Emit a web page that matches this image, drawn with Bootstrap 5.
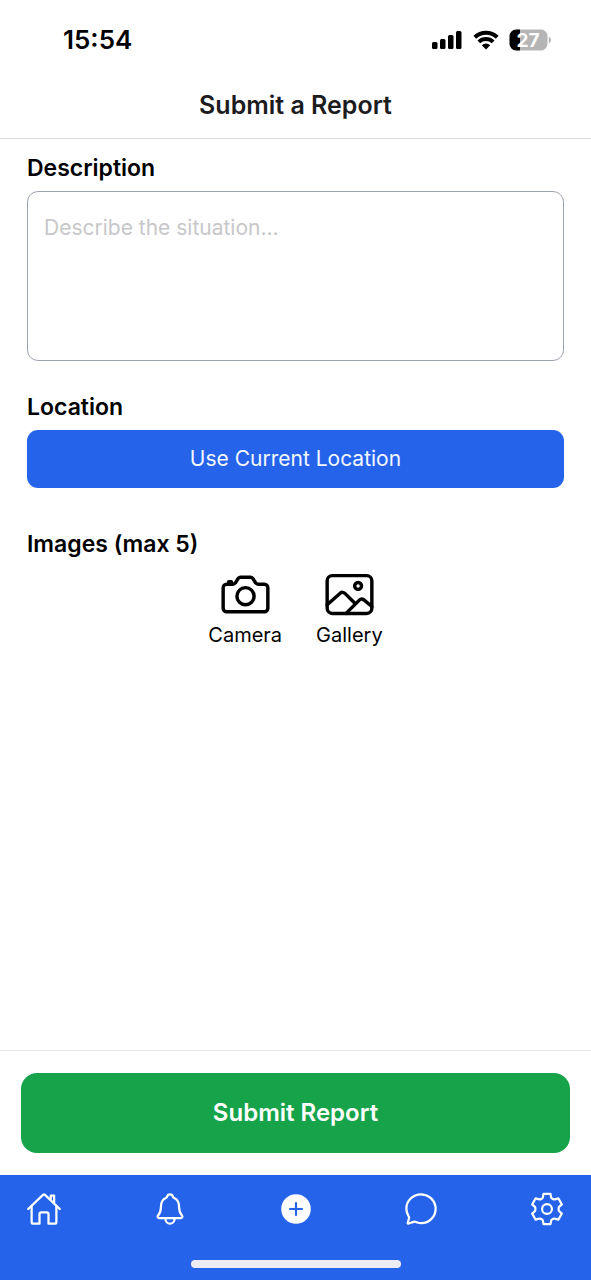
<!DOCTYPE html>
<html lang="en">
<head>
<meta charset="utf-8">
<meta name="viewport" content="width=device-width, initial-scale=1">
<title>Submit a Report</title>
<link href="https://cdn.jsdelivr.net/npm/bootstrap@5.3.0/dist/css/bootstrap.min.css" rel="stylesheet">
<style>
  body { font-family: Inter, "Liberation Sans", sans-serif; color: #000; background: #fff; }
  .status-row { height: 80px; padding: 0 39px 0 63px; }
  .clock { font-size: 26px; line-height: 32px; font-weight: 600; }
  .page-head { height: 59px; border-bottom: 1px solid #d8d8d8; padding-bottom: 8px; }
  .page-title { font-size: 25px; line-height: 32px; font-weight: 600; color: #1c1c1e; }
  .report-form { padding: 13px 27px 0; }
  .field-label { font-size: 23px; line-height: 32px; font-weight: 600; margin-bottom: 7px; }
  .field-text { height: 170px; padding: 20px 16px; border: 1px solid #9ca3af; border-radius: 11px; font-size: 21px; line-height: 32px; resize: none; }
  .field-text::placeholder { color: #c7c7c9; }
  .field-block { margin-bottom: 30px; }
  .locate-block { margin-bottom: 40px; }
  .btn-locate { height: 58px; border-radius: 11px; font-size: 21px; background: #2563eb; color: #f3f7ff; }
  .btn-send { height: 80px; border-radius: 16px; font-size: 24px; font-weight: 600; background: #16a34a; color: #fff; }
  .btn-locate:hover { background: #1d4ed8; color: #fff; }
  .btn-send:hover { background: #15803d; color: #fff; }
  .pick-row { gap: 34px; }
  .btn-pick { font-size: 20px; line-height: 26px; color: #000; }
  .send-bar { padding: 22px 21px; border-top: 1px solid #e5e7eb; }
  .tab-bar { height: 105px; padding: 16px 26px 12px; background: #2563eb; color: #fff; }
  .home-bar { width: 210px; height: 8px; background: #ececf3; }
  .line-icon { fill: none; stroke: currentColor; stroke-width: 32; stroke-linecap: round; stroke-linejoin: round; }
  .battery-level { font-size: 19px; font-weight: 700; fill: #fff; }
</style>
</head>
<body class="d-flex flex-column min-vh-100">
  <div class="status-row d-flex justify-content-between align-items-center">
    <span class="clock">15:54</span>
    <div class="d-flex align-items-center">
      <svg class="me-2" width="34" height="20" viewBox="0 0 34 20" aria-hidden="true">
        <rect x="1" y="12" width="5.500" height="7" rx="1.500"/><rect x="9" y="9" width="5.500" height="10" rx="1.500"/><rect x="17" y="5" width="5.500" height="14" rx="1.500"/><rect x="25" y="1" width="5.500" height="18" rx="1.500"/>
      </svg>
      <svg class="me-2" width="28" height="20" viewBox="0 0 28 20" fill="none" stroke="#000" stroke-width="4" aria-hidden="true">
        <path d="M1.800 7.200A16.500 16.500 0 0 1 24.200 7.200M5.800 11.900A10.500 10.500 0 0 1 20.200 11.900"/><path d="M13 19.500L8.800 15.300A6 6 0 0 1 17.200 15.300Z" fill="#000" stroke="none"/>
      </svg>
      <svg width="43" height="22" viewBox="0 0 43 22" role="img" aria-label="Battery 27%">
        <path d="M11 .5V21.500H7A6.500 6.500 0 0 1 .5 15V7A6.500 6.500 0 0 1 7 .5Z"/>
        <path d="M11 .5H32A6.500 6.500 0 0 1 38.500 7V15A6.500 6.500 0 0 1 32 21.500H11ZM39.800 7.500Q42 8.500 42 11T39.800 14.500Z" fill="#b5b5b5"/>
        <text class="battery-level" x="19" y="18" text-anchor="middle">27</text>
      </svg>
    </div>
  </div>
  <header class="page-head d-flex align-items-center justify-content-center">
    <h1 class="page-title m-0">Submit a Report</h1>
  </header>
  <main class="flex-grow-1">
    <form id="report" class="report-form">
      <div class="field-block">
        <label class="field-label d-block" for="description">Description</label>
        <textarea id="description" class="field-text form-control" placeholder="Describe the situation..."></textarea>
      </div>
      <div class="locate-block">
        <h2 class="field-label">Location</h2>
        <button type="button" class="btn btn-locate border-0 w-100 p-0">Use Current Location</button>
      </div>
      <h2 class="field-label">Images (max 5)</h2>
      <div class="pick-row d-flex justify-content-center">
        <button type="button" class="btn btn-pick border-0 p-0 d-flex flex-column align-items-center">
          <svg class="line-icon" width="55" height="55" viewBox="0 0 512 512" aria-hidden="true"><path d="M350.540 148.680l-26.620-42.060C318.310 100.080 310.620 96 302 96h-92c-8.620 0-16.310 4.080-21.920 10.620l-26.620 42.060C155.850 155.230 148.620 160 140 160H80a32 32 0 00-32 32v192a32 32 0 0032 32h352a32 32 0 0032-32V192a32 32 0 00-32-32h-59c-8.650 0-16.850-4.770-22.460-11.320z"/><circle cx="256" cy="272" r="80"/><path d="M124 158v-22h-24v22"/></svg>
          Camera
        </button>
        <button type="button" class="btn btn-pick border-0 p-0 d-flex flex-column align-items-center">
          <svg class="line-icon" width="55" height="55" viewBox="0 0 512 512" aria-hidden="true"><rect x="48" y="80" width="416" height="352" rx="48"/><circle cx="336" cy="176" r="32"/><path d="M304 335.790l-90.660-90.490a32 32 0 00-43.870-1.300L48 352M224 432l123.340-123.340a32 32 0 0143.110-2L464 368"/></svg>
          Gallery
        </button>
      </div>
    </form>
  </main>
  <div class="send-bar">
    <button type="submit" form="report" class="btn btn-send border-0 w-100 p-0">Submit Report</button>
  </div>
  <nav class="tab-bar d-flex flex-column justify-content-between align-items-center" aria-label="Main">
    <div class="d-flex justify-content-between w-100">
      <a class="text-white d-flex" href="#home" aria-label="Home"><svg class="line-icon" width="36" height="36" viewBox="0 0 512 512"><path d="M80 212v236a16 16 0 0016 16h96V328a24 24 0 0124-24h80a24 24 0 0124 24v136h96a16 16 0 0016-16V212"/><path d="M480 256L266.890 52c-5-5.280-16.690-5.340-21.780 0L32 256M400 179V64h-48v69"/></svg></a>
      <a class="text-white d-flex" href="#alerts" aria-label="Alerts"><svg class="line-icon" width="36" height="36" viewBox="0 0 512 512"><path d="M427.680 351.430C402 320 383.870 304 383.870 217.350 383.870 138 343.350 109.730 310 96c-4.430-1.820-8.600-6-9.950-10.550C294.200 65.540 277.800 48 256 48s-38.210 17.550-44 37.470c-1.350 4.600-5.520 8.710-9.950 10.530-33.390 13.750-73.870 41.920-73.870 121.350C128.130 304 110 320 84.320 351.430 73.680 364.450 83 384 101.610 384h308.880c18.510 0 27.770-19.610 17.190-32.570zM320 384v16a64 64 0 01-128 0v-16"/></svg></a>
      <a class="text-white d-flex" href="#report" aria-label="New report"><svg width="36" height="36" viewBox="0 0 36 36"><circle cx="18" cy="18" r="14.800" fill="#fff"/><path d="M18 12v12M12 18h12" stroke="#2563eb" stroke-width="2.200" stroke-linecap="round"/></svg></a>
      <a class="text-white d-flex" href="#messages" aria-label="Messages"><svg class="line-icon" width="36" height="36" viewBox="0 0 512 512"><path d="M87.490 380c1.190-4.380-1.440-10.470-3.950-14.860a44.860 44.860 0 00-2.540-3.800 199.810 199.810 0 01-33-110C47.650 139.090 140.730 48 255.830 48 356.210 48 440 117.540 459.580 209.850a199 199 0 014.420 41.640c0 112.410-89.490 204.930-204.590 204.930-18.300 0-43-4.600-56.470-8.370s-26.920-8.770-30.390-10.110a31.090 31.090 0 00-11.120-2.070 30.710 30.710 0 00-12.090 2.430l-67.830 24.480a16 16 0 01-4.670 1.220 9.600 9.600 0 01-9.570-9.740 15.850 15.850 0 01.600-3.290z"/></svg></a>
      <a class="text-white d-flex" href="#settings" aria-label="Settings"><svg width="36" height="36" viewBox="-19 -19 38 38" fill="none" stroke="currentColor" stroke-width="2.300" stroke-linejoin="round"><circle r="5.200"/><path d="M-3.700-16H3.700L4.300-12.400Q4.500-11.500 5.300-11.100L6.700-10.300Q7.400-9.900 8.200-10.200L12-11.200L15.700-4.800L13-2.500Q12.300-1.900 12.300-1V1Q12.300 1.900 13 2.500L15.700 4.800L12 11.200L8.200 10.200Q7.400 9.900 6.700 10.300L5.300 11.100Q4.500 11.500 4.300 12.400L3.700 16H-3.700L-4.300 12.400Q-4.500 11.500-5.300 11.100L-6.700 10.300Q-7.400 9.900-8.200 10.200L-12 11.200L-15.700 4.800L-13 2.500Q-12.300 1.900-12.300 1V-1Q-12.300-1.900-13-2.500L-15.700-4.800L-12-11.200L-8.200-10.200Q-7.400-9.900-6.700-10.300L-5.300-11.100Q-4.500-11.500-4.300-12.400Z"/></svg></a>
    </div>
    <div class="home-bar rounded-pill"></div>
  </nav>
<script src="https://cdn.jsdelivr.net/npm/bootstrap@5.3.0/dist/js/bootstrap.bundle.min.js"></script>
</body>
</html>
